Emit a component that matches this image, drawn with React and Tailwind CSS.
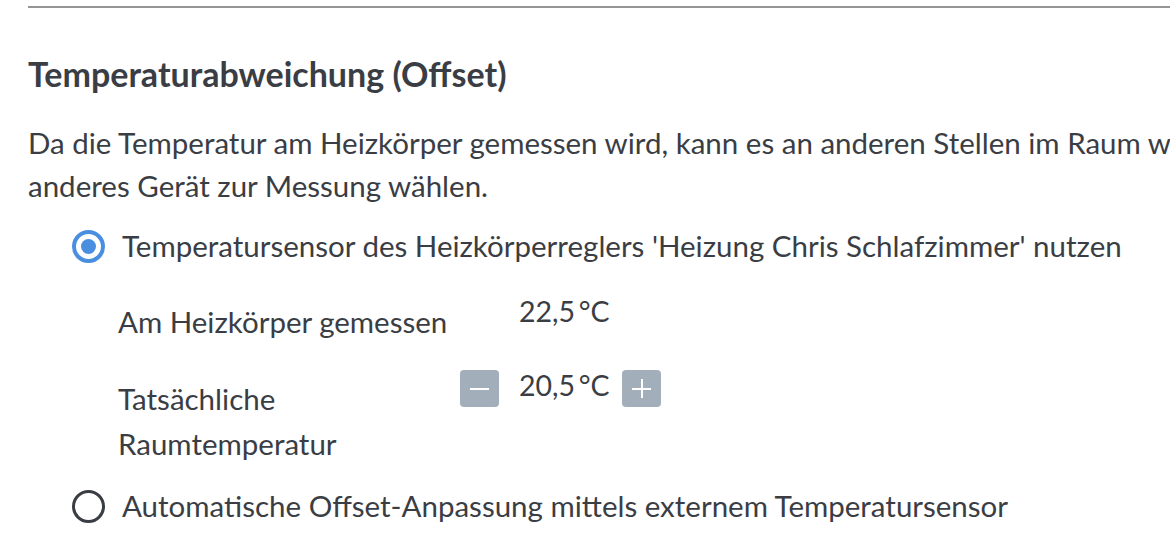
export default function App() {
  const font = { fontFamily: '"Lato", "Noto Sans", sans-serif' };
  return (
    <div className="w-[1170px] h-[557px] overflow-hidden bg-white text-[#3a3e44]" style={font}>
      <div className="w-[1400px] pl-[28px] pt-[6px]">
        <div className="h-[2px] w-[1142px] bg-[#959595]" />
        <h2 className="mt-[46px] text-[34px] leading-[40px] font-bold">
          Temperaturabweichung (Offset)
        </h2>
        <p className="mt-[27px] text-[29.5px] leading-[43px] whitespace-nowrap">
          Da die Temperatur am Heizkörper gemessen wird, kann es an anderen Stellen im Raum wärmer oder kälter sein. Sie können daher ein
          <br />
          anderes Gerät zur Messung wählen.
        </p>
        <div className="mt-[19px] ml-[44px] flex flex-col text-[29.5px]">
          <label className="flex items-center gap-[17px] h-[40px] leading-[40px]">
            <span className="w-[33px] h-[33px] rounded-full border-[4px] border-[#4a8ee0] flex items-center justify-center shrink-0">
              <span className="w-[15px] h-[15px] rounded-full bg-[#4a8ee0]" />
            </span>
            <span className="whitespace-nowrap">
              Temperatursensor des Heizkörperreglers 'Heizung Chris Schlafzimmer' nutzen
            </span>
          </label>
          <div className="ml-[46px] mt-[23px] grid grid-cols-[342px_auto] leading-[45px]">
            <div className="pt-[10px] whitespace-nowrap">Am Heizkörper gemessen</div>
            <div className="pl-[59px] whitespace-nowrap text-[28.5px]">22,5{'\u2009'}°C</div>
            <div className="pt-[32px]">
              Tatsächliche
              <br />
              Raumtemperatur
            </div>
            <div className="pt-[19px] flex items-start">
              <button className="w-[39px] h-[37px] mt-[7px] rounded-[4px] bg-[#a3aebb] flex items-center justify-center">
                <span className="w-[19px] h-[2px] bg-white" />
              </button>
              <span className="ml-[20px] w-[103px] whitespace-nowrap text-[28.5px]">20,5{'\u2009'}°C</span>
              <button className="w-[39px] h-[37px] mt-[7px] rounded-[4px] bg-[#a3aebb] flex items-center justify-center relative">
                <span className="w-[19px] h-[2px] bg-white" />
                <span className="absolute w-[2px] h-[19px] bg-white" />
              </button>
            </div>
          </div>
          <label className="mt-[20px] flex items-center gap-[17px] h-[40px] leading-[40px]">
            <span className="w-[33px] h-[33px] rounded-full border-[3px] border-[#3a3e44] shrink-0" />
            <span className="whitespace-nowrap">
              Automatische Offset-Anpassung mittels externem Temperatursensor
            </span>
          </label>
        </div>
      </div>
    </div>
  );
}
